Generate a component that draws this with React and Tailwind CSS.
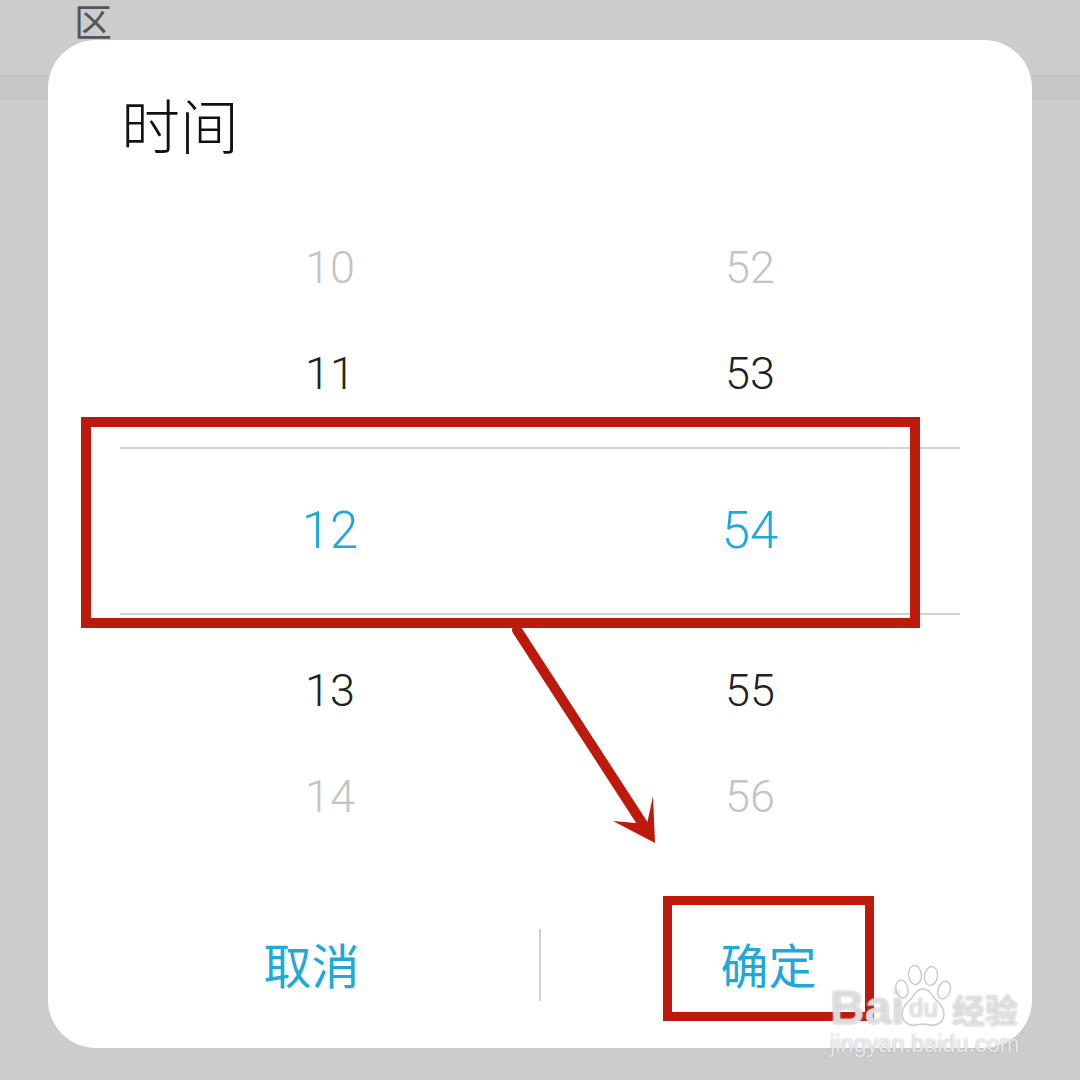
const cjk = { fontFamily: '"Noto Sans CJK SC", sans-serif' };

const Row = ({ left, right, className }) => (
  <div className={`grid grid-cols-2 text-center ${className}`}>
    <span>{left}</span>
    <span>{right}</span>
  </div>
);

const PawLogo = () => (
  <svg viewBox="0 0 56 62" className="w-[56px] h-[62px]" fill="none" stroke="#c9c9c9" strokeWidth="1.4">
    <ellipse cx="7" cy="24" rx="6" ry="9" transform="rotate(-12 7 24)" fill="#fff" fillOpacity="0.6" />
    <ellipse cx="20" cy="10" rx="6.5" ry="9.5" transform="rotate(-6 20 10)" fill="#fff" fillOpacity="0.6" />
    <ellipse cx="36" cy="11" rx="6.5" ry="9.5" transform="rotate(8 36 11)" fill="#fff" fillOpacity="0.6" />
    <ellipse cx="49" cy="25" rx="6" ry="9" transform="rotate(18 49 25)" fill="#fff" fillOpacity="0.6" />
    <path d="M28 24c-6 0-8 5-12 10-4 4-9 8-9 15 0 8 7 12 13 11 3 0 5-1 8-1s5 1 8 1c6 1 13-3 13-11 0-7-5-11-9-15-4-5-6-10-12-10z" fill="#fff" fillOpacity="0.6" />
  </svg>
);

const glow = '[text-shadow:0_0_2px_#a8a8a8]';

export default function App() {
  return (
    <div className="relative h-[1080px] w-[1080px] overflow-hidden bg-[#cccccc]" style={{ fontFamily: 'Roboto, sans-serif' }}>
      {/* page behind the dialog */}
      <div className="absolute inset-x-0 top-[75px] h-[25px] bg-[#c6c6c6]"></div>
      <span className="absolute left-[74px] top-[1px] text-[38px] leading-[38px] text-[#555]" style={cjk}>区</span>

      {/* dialog */}
      <div className="absolute left-[48px] top-[40px] w-[984px] h-[1008px] bg-white rounded-[48px] flex flex-col">
        <div className="h-[175px] pl-[73px] pt-[50px] text-[59px] leading-[68px] font-light text-[#111]" style={cjk}>时间</div>

        <div className="px-[72px] flex flex-col font-light">
          <Row left="10" right="52" className="h-[106px] items-center text-[45px] text-[#c4c4c4]" />
          <Row left="11" right="53" className="h-[106px] items-center text-[45px] text-[#222]" />
          <Row left="12" right="54" className="mt-[20px] h-[168px] items-center text-[51px] text-[#1fa8da] border-y-2 border-[#d2d2d2]" />
          <Row left="13" right="55" className="mt-[23px] h-[106px] items-center text-[45px] text-[#222]" />
          <Row left="14" right="56" className="h-[106px] items-center text-[45px] text-[#c4c4c4]" />
        </div>

        <div className="mt-[79px] px-[36px] h-[72px] flex text-[48px] text-[#1fa8da]" style={cjk}>
          <div className="flex-1 flex items-center justify-center pb-[5px]">取消</div>
          <div className="w-[2px] bg-[#d2d2d2]"></div>
          <div className="flex-1 flex items-center justify-center pb-[5px]">确定</div>
        </div>
      </div>

      {/* red annotations */}
      <div className="absolute left-[81px] top-[417px] w-[839px] h-[211px] border-[10px] border-[#bb1a0c]"></div>
      <div className="absolute left-[663px] top-[896px] w-[211px] h-[125px] border-[9px] border-[#bb1a0c]"></div>
      <svg className="absolute left-0 top-0" width="1080" height="1080" fill="none">
        <path d="M517 630L648 832" stroke="#bb1a0c" strokeWidth="10" strokeLinecap="round" />
        <polygon points="655,843 653,796 647,824 613,821" fill="#bb1a0c" />
      </svg>

      {/* watermark */}
      <div className="absolute left-[830px] top-[965px] w-[192px] h-[92px]">
        <span className={`absolute left-0 top-[19px] text-[48px] leading-[48px] font-bold text-white/60 ${glow}`} style={{ fontFamily: '"Liberation Sans", sans-serif' }}>Bai</span>
        <div className="absolute left-[65px] top-0"><PawLogo /></div>
        <span className={`absolute left-[79px] top-[30px] text-[26px] leading-[26px] text-white/60 ${glow}`} style={{ fontFamily: '"Liberation Sans", sans-serif' }}>du</span>
        <span className={`absolute left-[122px] top-[26px] text-[33px] leading-[36px] font-bold text-white/60 ${glow}`} style={cjk}>经验</span>
        <span className={`absolute left-0 top-[66px] text-[23.5px] leading-[26px] text-white/70 ${glow}`} style={{ fontFamily: '"Liberation Sans", sans-serif' }}>jingyan.baidu.com</span>
      </div>
    </div>
  );
}
